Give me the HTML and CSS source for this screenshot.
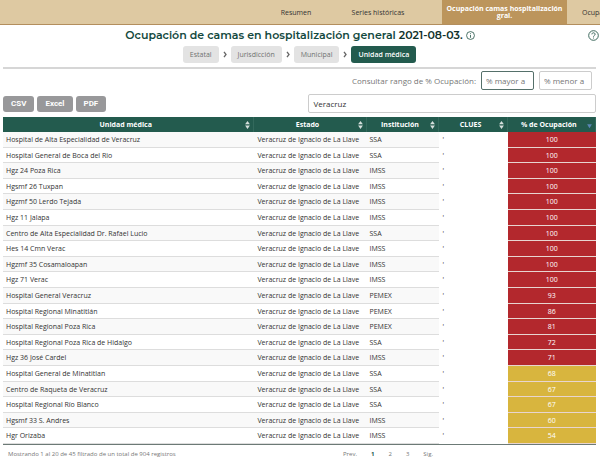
FILE: index.html
```
<!DOCTYPE html>
<html lang="es">
<head>
    <meta charset="UTF-8">
    <title>Ocupación de camas en hospitalización general</title>
    <link rel="stylesheet" href="styles.css">
</head>
<body>
    <nav class="menu">
        <a href="#resumen">Resumen</a>
        <a href="#series">Series históricas</a>
        <a href="#general" class="active">Ocupación camas hospitalización gral.</a>
        <a href="#ventilador" class="last">Ocupación</a>
    </nav>

    <header class="title-bar">
        <h1>Ocupación de camas en hospitalización general <span>2021-08-03.</span></h1>
        <svg class="info" viewBox="0 0 16 16"><circle cx="8" cy="8" r="7"/><path d="M8 7v5M8 4v1.5"/></svg>
        <button type="button" class="help" aria-label="Ayuda">
            <svg viewBox="0 0 24 24"><circle cx="12" cy="12" r="10.5"/><path d="M8.5 9.5c0-4.5 7-4.5 7 0 0 2.5-3.5 2.500-3.500 5M12 16.500v2"/></svg>
        </button>
    </header>

    <div class="steps">
        <button type="button">Estatal</button>
        <svg viewBox="0 0 6 10"><path d="M1.500 1L4.500 5l-3 4"/></svg>
        <button type="button">Jurisdicción</button>
        <svg viewBox="0 0 6 10"><path d="M1.500 1L4.500 5l-3 4"/></svg>
        <button type="button">Municipal</button>
        <svg viewBox="0 0 6 10"><path d="M1.500 1L4.500 5l-3 4"/></svg>
        <button type="button" class="active">Unidad médica</button>
    </div>

    <main>
        <div class="range">
            <label for="mayor">Consultar rango de % Ocupación:</label>
            <input type="text" id="mayor" class="focus" placeholder="% mayor a">
            <input type="text" id="menor" placeholder="% menor a" aria-label="% menor a">
        </div>

        <div class="tools">
            <div class="export">
                <button type="button">CSV</button>
                <button type="button">Excel</button>
                <button type="button">PDF</button>
            </div>
            <input type="search" class="search" value="Veracruz" aria-label="Buscar">
        </div>

        <table>
            <colgroup>
                <col class="c-unidad"><col class="c-estado"><col class="c-inst"><col class="c-clues"><col class="c-ocup">
            </colgroup>
            <thead>
                <tr>
                    <th><div><span>Unidad médica</span><svg viewBox="0 0 6 10"><path d="M3 0l3 4H0zM0 5.500h6L3 10z"/></svg></div></th>
                    <th><div><span>Estado</span><svg viewBox="0 0 6 10"><path d="M3 0l3 4H0zM0 5.500h6L3 10z"/></svg></div></th>
                    <th><div><span>Institución</span><svg viewBox="0 0 6 10"><path d="M3 0l3 4H0zM0 5.500h6L3 10z"/></svg></div></th>
                    <th><div><span>CLUES</span><svg viewBox="0 0 6 10"><path d="M3 0l3 4H0zM0 5.500h6L3 10z"/></svg></div></th>
                    <th><div><span>% de Ocupación</span><svg class="desc" viewBox="0 0 6 10"><path d="M0 4h6L3 9z"/></svg></div></th>
                </tr>
            </thead>
            <tbody id="filas"></tbody>
        </table>

        <footer>
            <span>Mostrando 1 al 20 de 45 filtrado de un total de 904 registros</span>
            <div class="pages">
                <a href="#prev">Prev.</a>
                <a href="#1" class="current">1</a>
                <a href="#2">2</a>
                <a href="#3">3</a>
                <a href="#sig">Sig.</a>
            </div>
        </footer>
    </main>

    <script>
        const unidades = [
            ['Hospital de Alta Especialidad de Veracruz', 'SSA', 100],
            ['Hospital General de Boca del Rio', 'SSA', 100],
            ['Hgz 24 Poza Rica', 'IMSS', 100],
            ['Hgsmf 26 Tuxpan', 'IMSS', 100],
            ['Hgzmf 50 Lerdo Tejada', 'IMSS', 100],
            ['Hgz 11 Jalapa', 'IMSS', 100],
            ['Centro de Alta Especialidad Dr. Rafael Lucio', 'SSA', 100],
            ['Hes 14 Cmn Verac', 'IMSS', 100],
            ['Hgzmf 35 Cosamaloapan', 'IMSS', 100],
            ['Hgz 71 Verac', 'IMSS', 100],
            ['Hospital General Veracruz', 'PEMEX', 93],
            ['Hospital Regional Minatitlán', 'PEMEX', 86],
            ['Hospital Regional Poza Rica', 'PEMEX', 81],
            ['Hospital Regional Poza Rica de Hidalgo', 'SSA', 72],
            ['Hgz 36 José Cardel', 'IMSS', 71],
            ['Hospital General de Minatitlan', 'SSA', 68],
            ['Centro de Raqueta de Veracruz', 'SSA', 67],
            ['Hospital Regional Río Blanco', 'SSA', 67],
            ['Hgsmf 33 S. Andres', 'IMSS', 60],
            ['Hgr Orizaba', 'IMSS', 54]
        ];

        document.getElementById('filas').innerHTML = unidades.map(function(u) {
            const nivel = u[2] >= 70 ? 'alto' : 'medio';
            return '<tr><td>' + u[0] + '</td><td>Veracruz de Ignacio de La Llave</td><td>' + u[1] +
                '</td><td class="clues">\'</td><td class="ocup ' + nivel + '">' + u[2] + '</td></tr>';
        }).join('');
    </script>
</body>
</html>
```
FILE: styles.css
```
* { box-sizing: border-box; }
body { margin: 0; background: #fff; color: #333; font-family: "Open Sans", "Noto Sans", sans-serif; font-size: 7px; overflow-x: hidden; }
button, input { font-family: inherit; margin: 0; }
a { color: inherit; text-decoration: none; }
svg { fill: none; stroke: #2d5c50; flex: none; }

.menu {
    display: grid;
    grid-template-columns: 1fr 36px 128px 125px 33px;
    height: 25px;
    background: #dec9a2;
    border-bottom: 1px solid #b38e5d;
    line-height: 7px;
    overflow: hidden;
}
.menu a { display: flex; align-items: center; justify-content: center; text-align: center; white-space: nowrap; }
.menu a:first-child { grid-column: 2; }
.menu .active { background: #bc955c; color: #fff; font-weight: 700; white-space: normal; padding: 0 4px; }
.menu .last { justify-content: flex-start; padding-left: 15px; }

.title-bar { display: grid; grid-template-columns: 1fr auto auto 1fr; align-items: center; height: 20px; column-gap: 3px; }
.title-bar h1 { grid-column: 2; margin: 0; font: 600 11px/20px "Montserrat", "Inter", sans-serif; color: #13493e; }
.title-bar h1 span { color: #10312b; }
.info { width: 9px; height: 9px; stroke-width: 1.5; }
.help { justify-self: end; display: flex; padding: 0; margin-right: 1px; border: 0; background: none; }
.help svg { width: 11px; height: 11px; stroke-width: 2; }

.steps { display: flex; justify-content: center; align-items: center; gap: 4px; margin: 0 4px 0 3px; padding: 1px 0 4px; border-bottom: 2px solid #d6d6d6; }
.steps button { height: 17px; padding: 0 7px; border: 0; border-radius: 3px; background: #e3e3e3; color: #6f7271; font-size: 7px; }
.steps .active { background: #235b4e; color: #fff; font-weight: 600; }
.steps svg { width: 4px; height: 7px; stroke: #666; stroke-width: 2; }

main { margin: 0 4px 0 3px; }
.range { display: flex; justify-content: flex-end; align-items: center; gap: 5px; padding: 2px 4px 4px 0; }
.range label { color: #777; font-size: 8px; }
.range input { width: 53px; height: 19px; padding: 0 4px; border: 1px solid #ccc; border-radius: 2px; font-size: 8px; outline: 0; }
.range .focus { border-color: #55706a; }
.range input::placeholder { color: #757575; }

.tools { display: flex; justify-content: space-between; align-items: center; padding-bottom: 4px; }
.export { display: flex; gap: 3px; }
.export button { height: 16px; padding: 0 8px; border: 0; border-radius: 3px; background: #98989a; color: #fff; font: bold 8px Roboto, sans-serif; }
.search { width: 48.5%; height: 19px; padding: 0 4px; border: 1px solid #ccc; border-radius: 2px; font-size: 8px; color: #333; appearance: none; outline: 0; }

table { width: 100%; table-layout: fixed; border-collapse: separate; border-spacing: 0; border-bottom: 1px solid #6c7a76; }
.c-unidad { width: 42.4%; }
.c-estado { width: 18.9%; }
.c-inst { width: 12.3%; }
.c-clues { width: 11.5%; }
.c-ocup { width: 14.9%; }
th { height: 15px; padding: 0 3px; background: #235b4e; color: #fff; font-weight: 700; border-right: 1px solid #33695c; }
th div { display: flex; align-items: center; line-height: 9px; white-space: nowrap; }
th span { flex: 1; text-align: center; }
th svg { width: 5px; height: 8px; fill: #d5dfdc; stroke: none; }
th .desc { fill: #5b86b5; }
td { height: 16px; padding: 0 3px; line-height: 9px; white-space: nowrap; border-bottom: 1px solid #ddd; }
tbody tr:nth-child(5n+2) td, tbody tr:nth-child(5n+4) td { height: 15px; }
tbody tr:nth-child(odd) { background: #f9f9f9; }
.clues { background: #fff; border-color: #fff; }
.ocup { color: #fff; text-align: center; border-color: #e8d5d0; }
.alto { background: #b3282d; }
.medio { background: #d8b53e; }

footer { display: grid; grid-template-columns: 340px 1fr; padding-top: 4px; line-height: 10px; color: #777; font-size: 6px; }
footer span { padding-left: 5px; }
.pages { display: flex; gap: 14px; }
.pages .current { color: #235b4e; font-weight: 700; }
```
